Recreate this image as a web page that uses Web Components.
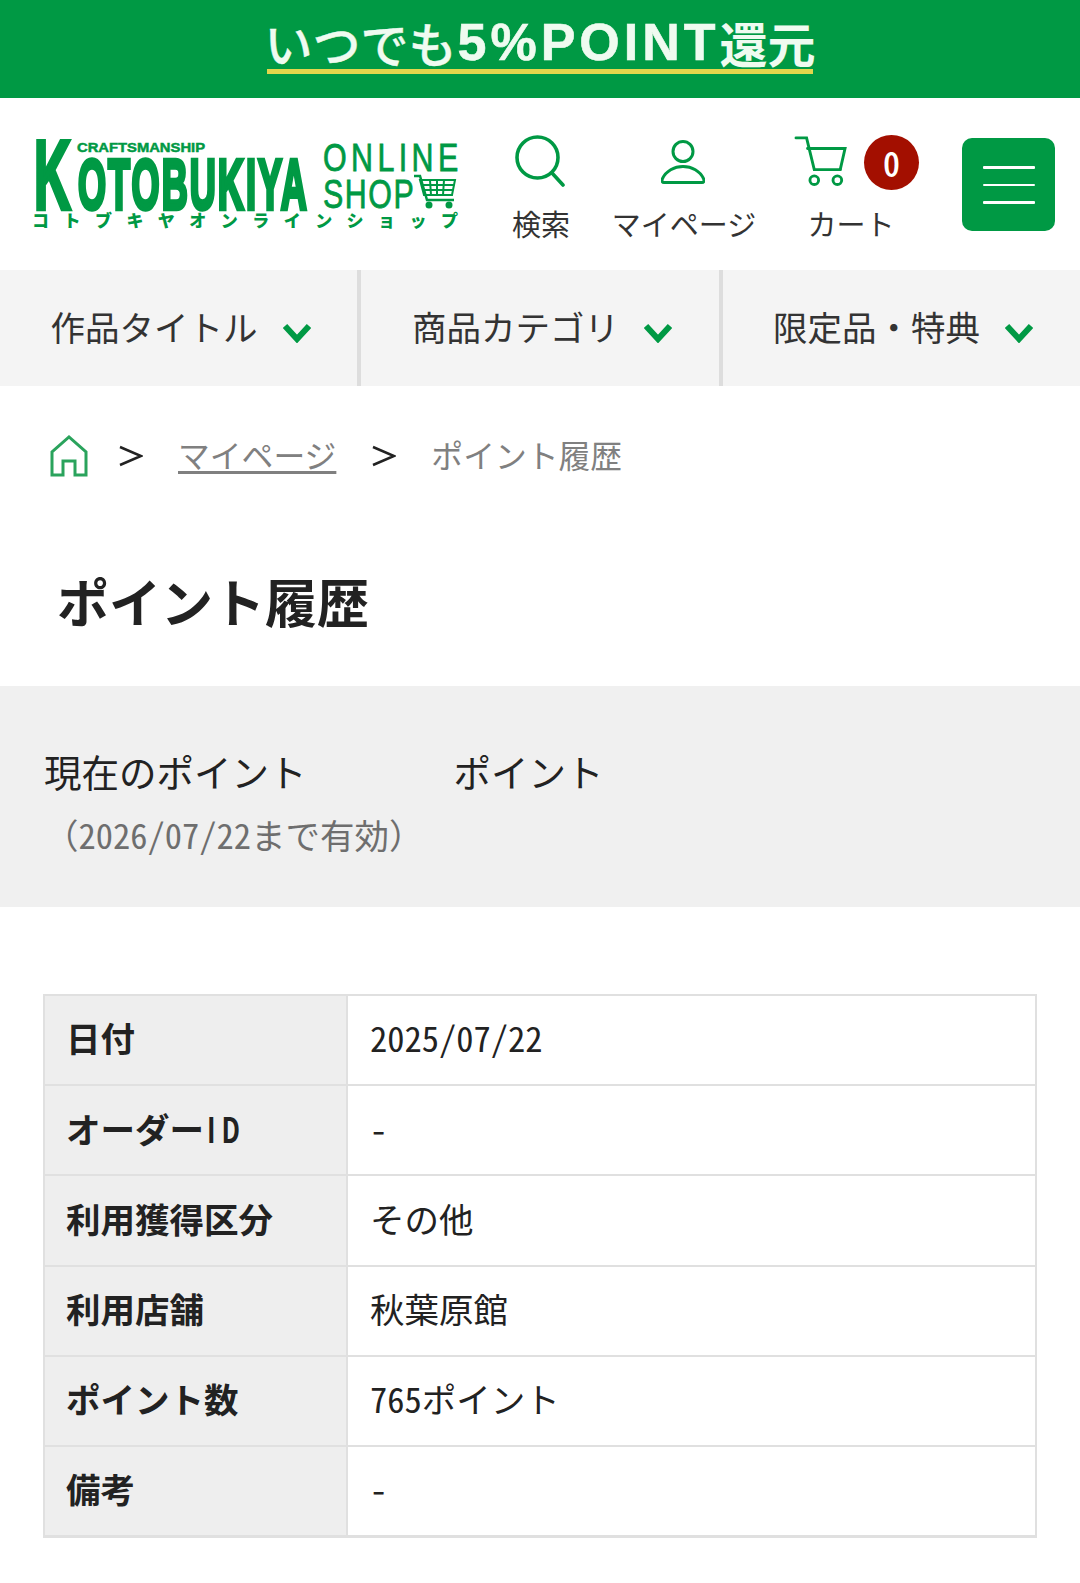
<!DOCTYPE html>
<html lang="ja">
<head>
<meta charset="utf-8">
<title>ポイント履歴</title>
<style>
  html, body { margin: 0; padding: 0; background: #fff; }
  body { font-family: "Noto Sans CJK JP", "Noto Sans", sans-serif; color: #222; width: 1080px; height: 1583px; overflow: hidden; }
</style>
</head>
<body>
<promo-banner></promo-banner>
<site-header></site-header>
<global-nav>
  <nav-item>作品タイトル</nav-item>
  <nav-item>商品カテゴリ</nav-item>
  <nav-item>限定品・特典</nav-item>
</global-nav>
<bread-crumb></bread-crumb>
<page-title>ポイント履歴</page-title>
<point-summary></point-summary>
<point-table>
  <point-row><span slot="label">日付</span>2025/07/22</point-row>
  <point-row><span slot="label">オーダー<narrow-id>ID</narrow-id></span>-</point-row>
  <point-row><span slot="label">利用獲得区分</span>その他</point-row>
  <point-row><span slot="label">利用店舗</span>秋葉原館</point-row>
  <point-row><span slot="label">ポイント数</span>765ポイント</point-row>
  <point-row><span slot="label">備考</span>-</point-row>
</point-table>

<script>
const GREEN = "#009944";
// the reference sets its latin and digits half width, Noto Sans CJK has them behind this feature
const HALF_WIDTH = `font-feature-settings: "hwid";`;

class PromoBanner extends HTMLElement {
  constructor() {
    super();
    this.attachShadow({ mode: "open" });
    this.shadowRoot.innerHTML = `
    <style>
      :host { display: flex; justify-content: center; height: 98px; background: ${GREEN}; }
      .text { height: 74px; margin: 0; box-sizing: border-box; width: 546px; border-bottom: 5px solid #e3d64c;
        display: flex; align-items: center; justify-content: center; white-space: nowrap; color: #effbf0; line-height: 1; padding-top: 14px; }
      .jp { font: 500 48px "Noto Sans CJK JP", sans-serif; -webkit-text-stroke: .4px #effbf0; }
      .en { font: 700 52px "Liberation Sans", sans-serif; letter-spacing: 4px; margin-left: 1px; -webkit-text-stroke: .6px #effbf0; }
      .end { font: 700 48px "Noto Sans CJK JP", sans-serif; }
    </style>
    <p class="text"><span class="jp">いつでも</span><span class="en">5%POINT</span><span class="end">還元</span></p>`;
  }
}

class ShopLogo extends HTMLElement {
  constructor() {
    super();
    this.attachShadow({ mode: "open" });
    this.shadowRoot.innerHTML = `
    <style>
      :host { display: block; width: 430px; height: 100px; }
      svg { display: block; overflow: visible; }
      text { fill: ${GREEN}; }
    </style>
    <svg width="430" height="100" viewBox="0 0 430 100">
      <text x="45" y="18" font-family="Liberation Sans" font-weight="700" font-size="13.5" textLength="128" lengthAdjust="spacingAndGlyphs" stroke="${GREEN}" stroke-width=".5">CRAFTSMANSHIP</text>
      <g transform="translate(2,75) scale(.515,1)" stroke="${GREEN}" stroke-width="4.500">
        <text font-family="Liberation Sans" font-weight="700" letter-spacing="4"><tspan font-size="99">K</tspan><tspan font-size="70" dx="10">OTOBUKIYA</tspan></text>
      </g>
      <text transform="translate(291,37) scale(.8,1)" font-family="Liberation Sans" font-size="38" letter-spacing="5.500" stroke="${GREEN}" stroke-width=".8">ONLINE</text>
      <text transform="translate(291,74) scale(.76,1)" font-family="Liberation Sans" font-size="40" letter-spacing="2" stroke="${GREEN}" stroke-width=".8">SHOP</text>
      <g fill="none" stroke="${GREEN}" stroke-width="2">
        <path d="M382 42h6l7 24h27" stroke-width="2.500"/>
        <path d="M388 46h35l-3 15h-28zM390 51h32M392 56h29M398 46l1 15M405 46v15M412 46l-1 15"/>
      </g>
      <circle cx="397" cy="71" r="3.500" fill="${GREEN}"/><circle cx="417" cy="71" r="3.500" fill="${GREEN}"/>
      <text x="0" y="93" font-family="Noto Sans CJK JP" font-weight="900" font-size="17" textLength="426" lengthAdjust="spacing">コトブキヤオンラインショップ</text>
    </svg>`;
  }
}

class HeaderAction extends HTMLElement {
  constructor() {
    super();
    this.attachShadow({ mode: "open" });
    this.shadowRoot.innerHTML = `
    <style>
      :host { display: flex; flex-direction: column; align-items: center; position: relative; }
      .icon { height: 62px; display: flex; align-items: center; justify-content: center; }
      .label { font-size: 29px; line-height: 40px; margin-top: 11px; color: #333; white-space: nowrap; }
      ::slotted(svg) { display: block; }
    </style>
    <div class="icon"><slot name="icon"></slot></div>
    <div class="label"><slot></slot></div>
    <slot name="badge"></slot>`;
  }
}

class SiteHeader extends HTMLElement {
  constructor() {
    super();
    this.attachShadow({ mode: "open" });
    this.shadowRoot.innerHTML = `
    <style>
      :host { display: flex; align-items: center; height: 172px; box-sizing: border-box; padding-left: 32px; }
      .actions { display: flex; margin: 5px 0 0 51px; }
      .search { width: 56px; }
      .mypage { width: 144px; margin-left: 43px; }
      .cart { width: 88px; margin-left: 51px; }
      .badge { position: absolute; left: 57px; top: 5px; width: 55px; height: 55px; border-radius: 50%; background: #a30f00;
        color: #fff; display: flex; align-items: center; justify-content: center; font: 500 34px "Noto Sans CJK JP", sans-serif; ${HALF_WIDTH} }
      .menu { width: 93px; height: 93px; margin-left: 67px; background: ${GREEN}; border-radius: 10px; box-sizing: border-box; padding-top: 2px;
        display: flex; flex-direction: column; gap: 15px; align-items: center; justify-content: center; }
      .menu i { display: block; width: 52px; height: 2.500px; background: #fff; border-radius: 1px; }
    </style>
    <shop-logo></shop-logo>
    <div class="actions">
      <header-action class="search">
        <svg slot="icon" width="50" height="52" viewBox="0 0 50 52" style="margin-right:3px" fill="none" stroke="${GREEN}" stroke-width="3.600" stroke-linecap="round"><circle cx="22.500" cy="22.500" r="20.500"/><path d="M37 38l11 12"/></svg>
        検索
      </header-action>
      <header-action class="mypage">
        <svg slot="icon" width="44" height="45" viewBox="0 0 44 45" style="margin-right:2px" fill="none" stroke="${GREEN}" stroke-width="3"><circle cx="22" cy="12.500" r="10"/><path d="M3 43.500h38c2 0 2.500-2 1.500-4C39 32 31 27.500 22 27.500S5 32 1.500 39.500c-1 2-.5 4 1.500 4z"/></svg>
        マイページ
      </header-action>
      <header-action class="cart">
        <svg slot="icon" width="54" height="50" viewBox="0 0 54 52" style="margin-right:60px" fill="none" stroke="${GREEN}" stroke-width="3" stroke-linecap="round"><path d="M1 2h11l8 33h27"/><path d="M13 13h39l-5 22"/><circle cx="20" cy="46" r="4.500"/><circle cx="44" cy="46" r="4.500"/></svg>
        カート
        <span class="badge" slot="badge">0</span>
      </header-action>
    </div>
    <div class="menu"><i></i><i></i><i></i></div>`;
  }
}

class GlobalNav extends HTMLElement {
  constructor() {
    super();
    this.attachShadow({ mode: "open" });
    this.shadowRoot.innerHTML = `
    <style>
      :host { display: grid; grid-template-columns: 361px 362px 1fr; height: 116px; background: #f4f4f4; }
    </style>
    <slot></slot>`;
  }
}

class NavItem extends HTMLElement {
  constructor() {
    super();
    this.attachShadow({ mode: "open" });
    this.shadowRoot.innerHTML = `
    <style>
      :host { display: flex; align-items: center; justify-content: center; gap: 25px; font-size: 34.500px; line-height: 1; color: #333;
        border-right: 4px solid #ddd; padding: 0 0 4px 4px; white-space: nowrap; }
      :host(:last-child) { border-right: 0; padding-left: 3px; }
      svg { display: block; margin-top: 13px; }
    </style>
    <span><slot></slot></span>
    <svg width="28" height="20" viewBox="0 0 28 20" fill="none" stroke="${GREEN}" stroke-width="6"><path d="M2 3l12 13L26 3"/></svg>`;
  }
}

class BreadCrumb extends HTMLElement {
  constructor() {
    super();
    this.attachShadow({ mode: "open" });
    this.shadowRoot.innerHTML = `
    <style>
      :host { display: flex; align-items: center; height: 140px; padding-left: 50px; font-size: 31.800px; color: #808080; white-space: nowrap; }
      svg { display: block; flex: none; }
      .home { margin-right: 31px; }
      a, span { margin: -4px 0 0 35px; }
      a { color: inherit; text-decoration: underline; text-underline-offset: 3px; }
      .sep { margin-left: 36px; }
    </style>
    <svg class="home" width="38" height="42" viewBox="0 0 38 42" fill="none" stroke="#2aa35c" stroke-width="3"><path d="M2 40V17L19 2l17 15v23H25V26H13v14z"/></svg>
    <svg width="24" height="24" viewBox="0 0 24 24" fill="none" stroke="#222" stroke-width="2.500"><path d="M1 3l21 9L1 21"/></svg>
    <a>マイページ</a>
    <svg class="sep" width="24" height="24" viewBox="0 0 24 24" fill="none" stroke="#222" stroke-width="2.500"><path d="M1 3l21 9L1 21"/></svg>
    <span>ポイント履歴</span>`;
  }
}

class PageTitle extends HTMLElement {
  constructor() {
    super();
    this.attachShadow({ mode: "open" });
    this.shadowRoot.innerHTML = `
    <style>
      :host { display: flex; align-items: center; height: 160px; padding: 0 0 10px 57px; box-sizing: border-box; font-size: 52px; font-weight: 700; color: #222; line-height: 1; }
    </style>
    <slot></slot>`;
  }
}

class PointSummary extends HTMLElement {
  constructor() {
    super();
    this.attachShadow({ mode: "open" });
    this.shadowRoot.innerHTML = `
    <style>
      :host { display: block; height: 221px; box-sizing: border-box; padding: 58px 0 0 44px; background: #f0f0f0; color: #222; }
      .row { display: flex; font-size: 37.500px; line-height: 54px; white-space: nowrap; }
      .row span + span { margin-left: 147px; }
      .until { font-size: 34.500px; line-height: 54px; color: #6e6e6e; margin-top: 9px; white-space: nowrap; }
      .date { ${HALF_WIDTH} }
    </style>
    <div class="row"><span>現在のポイント</span><span>ポイント</span></div>
    <div class="until">（<span class="date">2026/07/22</span>まで有効）</div>`;
  }
}

class PointTable extends HTMLElement {
  constructor() {
    super();
    this.attachShadow({ mode: "open" });
    this.shadowRoot.innerHTML = `
    <style>
      :host { display: block; margin: 87px 43px 0; border: 2px solid #e0e0e0; border-bottom-width: 1px; box-sizing: border-box; width: 994px; }
    </style>
    <slot></slot>`;
  }
}

class PointRow extends HTMLElement {
  constructor() {
    super();
    this.attachShadow({ mode: "open" });
    this.shadowRoot.innerHTML = `
    <style>
      :host { display: grid; grid-template-columns: 303px 1fr; height: 90.200px; box-sizing: border-box; border-bottom: 2px solid #e0e0e0; font-size: 34.500px; line-height: 1; ${HALF_WIDTH} }
      .label, .value { display: flex; align-items: center; padding-bottom: 5px; }
      .label { background: #eee; font-weight: 700; padding-left: 21px; border-right: 2px solid #e0e0e0; color: #222; }
      .value { padding-left: 22px; color: #222; }
    </style>
    <div class="label"><slot name="label"></slot></div>
    <div class="value"><slot></slot></div>`;
  }
}

// hwid gives a serifed I, so the ID of the order label is squeezed by hand
class NarrowId extends HTMLElement {
  constructor() {
    super();
    this.attachShadow({ mode: "open" });
    this.shadowRoot.innerHTML = `
    <style>
      :host { display: inline-block; width: 36px; white-space: nowrap; font-feature-settings: normal; }
      span { display: inline-block; transform: scaleX(.75); transform-origin: 0 50%; letter-spacing: 8px; margin-left: 3px; }
    </style>
    <span><slot></slot></span>`;
  }
}

customElements.define("promo-banner", PromoBanner);
customElements.define("shop-logo", ShopLogo);
customElements.define("header-action", HeaderAction);
customElements.define("site-header", SiteHeader);
customElements.define("global-nav", GlobalNav);
customElements.define("nav-item", NavItem);
customElements.define("bread-crumb", BreadCrumb);
customElements.define("page-title", PageTitle);
customElements.define("point-summary", PointSummary);
customElements.define("point-table", PointTable);
customElements.define("point-row", PointRow);
customElements.define("narrow-id", NarrowId);
</script>
</body>
</html>
